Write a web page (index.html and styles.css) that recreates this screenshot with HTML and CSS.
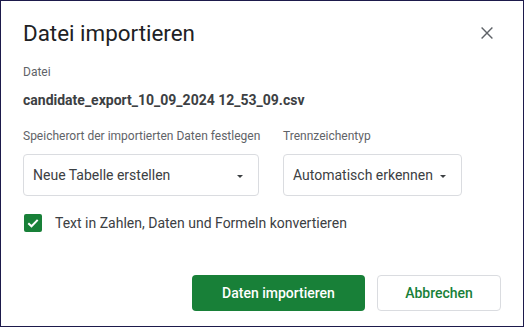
FILE: index.html
```html
<!DOCTYPE html>
<html lang="de">
<head>
    <meta charset="UTF-8">
    <title>Datei importieren</title>
    <link rel="stylesheet" href="styles.css">
</head>
<body>
<main class="dialog">
    <header class="dialogHeader">
        <h1 class="dialogTitle">Datei importieren</h1>
        <button class="closeButton" aria-label="Schließen">
            <svg width="20" height="20" viewBox="0 0 20 20">
                <path d="M4.6 4.6L15.4 15.4M15.4 4.6L4.6 15.4" stroke="#5f6368" stroke-width="1.4" fill="none"/>
            </svg>
        </button>
    </header>

    <p class="fieldLabel">Datei</p>
    <p class="fileName">candidate_export_10_09_2024 12_53_09.csv</p>

    <div class="optionsRow">
        <div class="option optionLocation">
            <p class="fieldLabel">Speicherort der importierten Daten festlegen</p>
            <div class="selectBox">
                <span>Neue Tabelle erstellen</span>
                <span class="selectArrow"></span>
            </div>
        </div>
        <div class="option optionSeparator">
            <p class="fieldLabel">Trennzeichentyp</p>
            <div class="selectBox">
                <span>Automatisch erkennen</span>
                <span class="selectArrow"></span>
            </div>
        </div>
    </div>

    <label class="checkRow">
        <span class="checkBox">
            <svg width="18" height="18" viewBox="0 0 18 18">
                <path d="M4.3 9.2L7.5 12.3L13.7 5.9" stroke="#fff" stroke-width="2" fill="none"/>
            </svg>
        </span>
        <span>Text in Zahlen, Daten und Formeln konvertieren</span>
    </label>

    <footer class="dialogFooter">
        <button class="primaryButton">Daten importieren</button>
        <button class="secondaryButton">Abbrechen</button>
    </footer>
</main>
</body>
</html>
```

FILE: styles.css
```css
* {
    box-sizing: border-box;
    margin: 0;
    padding: 0;
}

body {
    font-family: Roboto, "Liberation Sans", sans-serif;
    background-color: #fff;
}

.dialog {
    width: 100vw;
    height: 100vh;
    border: 1px solid #1d1a4b;
    padding: 18px 22px 15px;
    display: flex;
    flex-direction: column;
}

.dialogHeader {
    display: flex;
    justify-content: space-between;
    align-items: center;
}

.dialogTitle {
    font-size: 22.4px;
    line-height: 28px;
    font-weight: 400;
    color: #202124;
}

.closeButton {
    background: none;
    border: none;
    width: 20px;
    height: 20px;
    margin-right: 4px;
    cursor: pointer;
}

.closeButton svg {
    display: block;
}

.fieldLabel {
    font-size: 12px;
    line-height: 16px;
    color: #5f6368;
    white-space: nowrap;
}

.dialogHeader + .fieldLabel {
    margin-top: 17px;
}

.fileName {
    margin-top: 10px;
    font-size: 14px;
    line-height: 20px;
    font-weight: 700;
    color: #3c4043;
}

.optionsRow {
    display: flex;
    gap: 24px;
    margin-top: 18px;
}

.optionLocation {
    width: 236px;
}

.optionSeparator {
    width: 179px;
}

.selectBox {
    margin-top: 10px;
    height: 42px;
    border: 1px solid #dadce0;
    border-radius: 4px;
    padding: 0 15px 0 9px;
    display: flex;
    align-items: center;
    font-size: 14px;
    color: #3c4043;
}

.selectArrow {
    margin-left: auto;
    width: 0;
    height: 0;
    border-left: 3.5px solid transparent;
    border-right: 3.5px solid transparent;
    border-top: 3.5px solid #3c4043;
    margin-top: 2px;
}

.checkRow {
    margin-top: 17px;
    display: flex;
    align-items: center;
    gap: 13px;
    font-size: 14px;
    line-height: 20px;
    color: #3c4043;
    padding-left: 1px;
}

.checkBox {
    width: 18px;
    height: 18px;
    border-radius: 2px;
    background-color: #188038;
}

.checkBox svg {
    display: block;
}

.dialogFooter {
    margin-top: auto;
    display: flex;
    justify-content: flex-end;
    gap: 12px;
}

.primaryButton, .secondaryButton {
    height: 36px;
    border-radius: 4px;
    font-family: Roboto, "Liberation Sans", sans-serif;
    font-size: 14px;
    font-weight: 500;
    cursor: pointer;
}

.primaryButton {
    width: 173px;
    background-color: #188038;
    border: none;
    color: #fff;
}

.secondaryButton {
    width: 124px;
    background-color: #fff;
    border: 1px solid #dadce0;
    color: #188038;
}
```
